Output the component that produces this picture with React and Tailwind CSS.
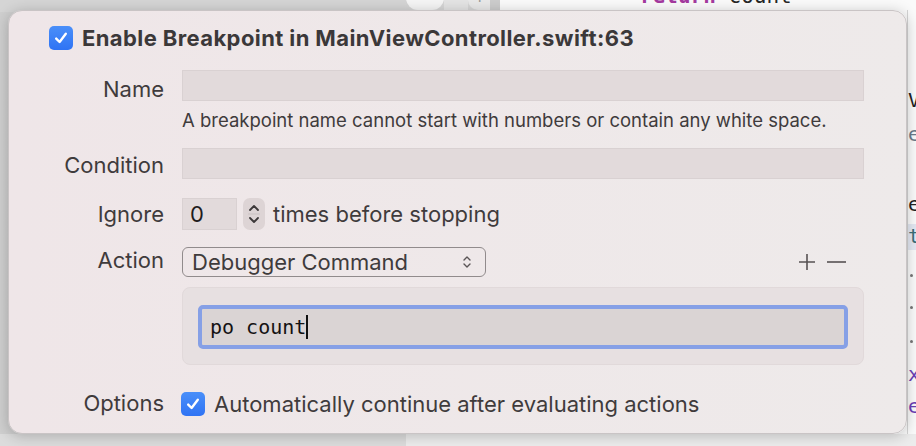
import React from "react";

const ui = "font-['Inter','Noto_Sans',sans-serif]";
const mono = "font-['DejaVu_Sans_Mono','Liberation_Mono',monospace]";

function Checkbox() {
  return (
    <span className="flex h-[24px] w-[24px] shrink-0 items-center justify-center rounded-[5px] bg-gradient-to-b from-[#4a8ff9] to-[#2f73f4]">
      <svg width="16" height="16" viewBox="0 0 16 16" fill="none">
        <path
          d="M3.2 8.6 L6.6 12 L12.8 3.8"
          stroke="white"
          strokeWidth="2.4"
          strokeLinecap="round"
          strokeLinejoin="round"
        />
      </svg>
    </span>
  );
}

function Label({ children, shift = "" }) {
  return (
    <div className={`relative w-[155px] shrink-0 text-right text-[22px] leading-none text-[#3f3b3c] ${shift}`}>
      {children}
    </div>
  );
}

function Stepper() {
  return (
    <div className="ml-[6px] flex h-[32px] w-[22px] flex-col items-center justify-center rounded-[7px] bg-[#ddd4d5]">
      <svg width="14" height="26" viewBox="0 0 14 26" fill="none">
        <path d="M3 9 L7 5 L11 9" stroke="#3c3839" strokeWidth="1.8" strokeLinecap="round" strokeLinejoin="round" />
        <line x1="1" y1="13" x2="13" y2="13" stroke="#c9c1c2" strokeWidth="1" />
        <path d="M3 17 L7 21 L11 17" stroke="#3c3839" strokeWidth="1.8" strokeLinecap="round" strokeLinejoin="round" />
      </svg>
    </div>
  );
}

function UpDown() {
  return (
    <svg width="10" height="16" viewBox="0 0 10 16" fill="none">
      <path d="M2 6 L5 3 L8 6" stroke="#5a5556" strokeWidth="1.4" strokeLinecap="round" strokeLinejoin="round" />
      <path d="M2 10 L5 13 L8 10" stroke="#5a5556" strokeWidth="1.4" strokeLinecap="round" strokeLinejoin="round" />
    </svg>
  );
}

function Backdrop() {
  return (
    <>
      {/* top strip of the editor window behind */}
      <div className="absolute left-0 top-0 h-[12px] w-[405px] bg-[#d5d5d5]" />
      <div className="absolute left-[406px] top-[-10px] h-[20px] w-[38px] rounded-b-[12px] bg-[#f5f5f5]" />
      <div className="absolute left-[444px] top-0 h-[12px] w-[24px] bg-[#e4e4e4]" />
      <div className="absolute left-[468px] top-[-10px] h-[20px] w-[24px] rounded-bl-[10px] bg-[#e9e9e9]" />
      <div className={`absolute left-[474px] top-[-13px] text-[14px] text-[#9a9a9a] ${mono}`}>4</div>
      <div className="absolute left-[490px] top-0 h-[12px] w-[10px] bg-[#cdcdcd]" />
      <div className="absolute left-[500px] top-0 h-[446px] w-[416px] bg-[#fafafa]" />
      <div className={`absolute left-[640px] top-[-14px] text-[21px] leading-none ${mono}`}>
        <span className="font-bold text-[#a43a9f]">return</span>
        <span className="text-[#262626]"> count</span>
      </div>

      {/* code on the right edge */}
      <div className="absolute left-[907px] top-[10px] h-[424px] w-px bg-[#d4d4d4]" />
      <div className="absolute left-[908px] top-[224px] h-[26px] w-[8px] bg-[#e3e8f2]" />
      <div className={`absolute left-[908px] top-[90px] text-[20px] leading-none text-[#222] ${mono}`}>V</div>
      <div className={`absolute left-[908px] top-[124px] text-[20px] leading-none text-[#6b7b8a] ${mono}`}>e</div>
      <div className={`absolute left-[908px] top-[194px] text-[20px] leading-none text-[#222] ${mono}`}>e</div>
      <div className={`absolute left-[908px] top-[226px] text-[20px] leading-none text-[#3b6f79] ${mono}`}>t</div>
      <div className="absolute left-[910px] top-[274px] h-[3px] w-[3px] rounded-full bg-[#777]" />
      <div className="absolute left-[910px] top-[306px] h-[3px] w-[3px] rounded-full bg-[#777]" />
      <div className="absolute left-[910px] top-[340px] h-[3px] w-[3px] rounded-full bg-[#777]" />
      <div className={`absolute left-[908px] top-[364px] text-[20px] leading-none text-[#6b3fb5] ${mono}`}>x</div>
      <div className={`absolute left-[908px] top-[396px] text-[20px] leading-none text-[#6b3fb5] ${mono}`}>e</div>

      {/* bottom strip */}
      <div className="absolute left-0 top-[434px] h-[12px] w-[406px] bg-[#dcdcdc]" />
      <div className="absolute left-[406px] top-[434px] h-[12px] w-[510px] bg-[#ececec]" />
    </>
  );
}

export default function App() {
  return (
    <div className={`relative h-[446px] w-[916px] overflow-hidden bg-gradient-to-r from-[#cfcfcf] to-[#dddddd] ${ui}`}>
      <Backdrop />

      <div className="absolute left-[8px] top-[10px] flex h-[424px] w-[899px] flex-col rounded-[14px] border border-[#c9c4c5] bg-gradient-to-r from-[#efe6e8] to-[#eeeaea] pr-[42px] pt-[15px] shadow-[0_2px_14px_rgba(0,0,0,0.22)]">
        <div className="flex items-center pl-[40px]">
          <Checkbox />
          <span className="ml-[9px] text-[22px] font-bold leading-none tracking-[0.4px] text-[#3b3839]">
            Enable Breakpoint in MainViewController.swift:63
          </span>
        </div>

        <div className="mt-[20px] flex items-center">
          <Label shift="top-[3px]">Name</Label>
          <div className="ml-[18px] h-[31px] flex-1 border border-[#d9d1d2] bg-[#e2dadb]" />
        </div>
        <div className="ml-[173px] mt-[8px] text-[18.5px] leading-[22px] text-[#3f3b3c]">
          A breakpoint name cannot start with numbers or contain any white space.
        </div>

        <div className="mt-[17px] flex items-center">
          <Label shift="top-[1px]">Condition</Label>
          <div className="ml-[18px] h-[31px] flex-1 border border-[#d9d1d2] bg-[#e2dadb]" />
        </div>

        <div className="mt-[19px] flex items-center">
          <Label>Ignore</Label>
          <div className="ml-[18px] flex h-[32px] w-[55px] items-center border border-[#d9d1d2] bg-[#e2dadb] pl-[7px] text-[22px] text-[#1f1c1d]">
            0
          </div>
          <Stepper />
          <span className="ml-[8px] text-[22px] leading-none text-[#3f3b3c]">times before stopping</span>
        </div>

        <div className="mt-[17px] flex items-center">
          <Label shift="-top-[2px]">Action</Label>
          <div className="ml-[18px] flex h-[30px] w-[304px] items-center justify-between rounded-[6px] border-[1.5px] border-[#918b8c] pl-[9px] pr-[13px]">
            <span className="text-[22px] leading-none text-[#3f3b3c]">Debugger Command</span>
            <UpDown />
          </div>
          <div className="ml-auto flex items-center gap-[11px] pr-[18px]">
            <svg width="18" height="18" viewBox="0 0 18 18">
              <path d="M9 1 V17 M1 9 H17" stroke="#575253" strokeWidth="1.6" />
            </svg>
            <svg width="19" height="18" viewBox="0 0 19 18">
              <path d="M0 9 H19" stroke="#575253" strokeWidth="1.6" />
            </svg>
          </div>
        </div>

        <div className="ml-[173px] mt-[10px] h-[78px] rounded-[8px] border border-[#e1d9da] bg-[#e7e0e1] px-[15px] pt-[17px]">
          <div className="flex h-[44px] items-center rounded-[5px] border-[4px] border-[#86a0e6] bg-[#dad4d4] pl-[8px]">
            <span className={`text-[20px] leading-none text-[#141213] ${mono}`}>po count</span>
            <span className="h-[24px] w-[2px] bg-[#111]" />
          </div>
        </div>

        <div className="mt-[27px] flex items-center">
          <Label shift="-top-[1px]">Options</Label>
          <div className="ml-[17px]">
            <Checkbox />
          </div>
          <span className="ml-[9px] text-[22px] leading-none text-[#3f3b3c]">
            Automatically continue after evaluating actions
          </span>
        </div>
      </div>
    </div>
  );
}
